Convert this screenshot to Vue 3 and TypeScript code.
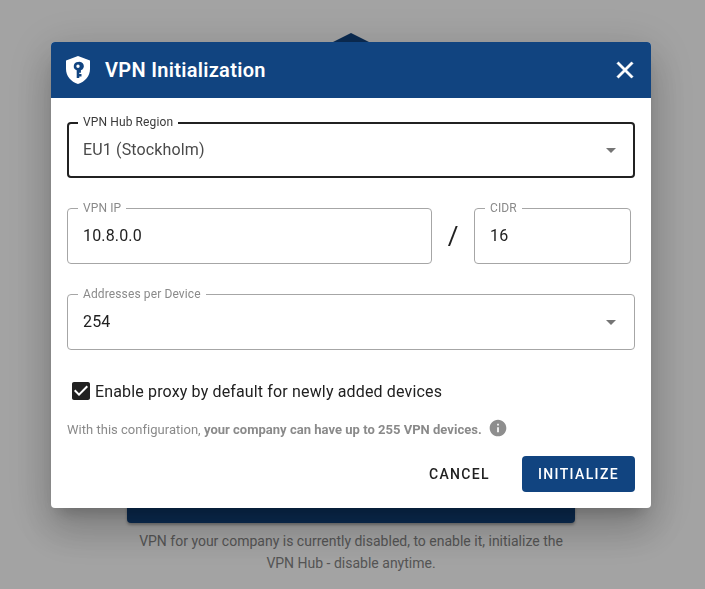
<script setup lang="ts">
import { ref } from 'vue'

const proxy = ref(true)
const closePath = 'M19 6.41 17.59 5 12 10.59 6.41 5 5 6.41 10.59 12 5 17.59 6.41 19 12 13.41 17.59 19 19 17.59 13.41 12z'
</script>

<template>
  <div class="page">
    <svg class="hero" width="448" height="450" viewBox="0 0 448 450">
      <polygon points="224,0 304,40 304,200 144,200 144,40" fill="#114480" />
    </svg>
    <div class="start-btn" />
    <p class="page-text">
      VPN for your company is currently disabled, to enable it, initialize the<br />
      VPN Hub - disable anytime.
    </p>
  </div>

  <div class="backdrop">
    <div class="dialog">
      <header class="dialog-head">
        <svg class="shield" width="24" height="28" viewBox="0 0 24 28">
          <path
            fill="#fff"
            fill-rule="evenodd"
            d="M12 0 24 4.600V13c0 7-4.800 12.600-12 15C4.800 25.600 0 20 0 13V4.600ZM12 6a4.200 4.200 0 0 0-1.300 8.200V22h2.600v-1.600h2.200v-2.300h-2.200v-1.300h1.600v-2.500A4.200 4.200 0 0 0 12 6Zm0 2.500a1.700 1.700 0 1 1 0 3.400 1.700 1.700 0 0 1 0-3.400Z"
          />
        </svg>
        <h2 class="dialog-title">VPN Initialization</h2>
        <svg class="close" width="28" height="28" viewBox="0 0 24 24"><path fill="#fff" stroke="#fff" stroke-width="0.4" :d="closePath" /></svg>
      </header>

      <div class="dialog-body">
        <div class="field focused">
          <span class="field-label">VPN Hub Region</span>
          <span class="field-value muted">EU1 (Stockholm)</span>
          <svg class="arrow" width="24" height="24" viewBox="0 0 24 24"><path d="M7 10l5 5 5-5z" /></svg>
        </div>

        <div class="ip-row">
          <div class="field ip">
            <span class="field-label">VPN IP</span>
            <span class="field-value">10.8.0.0</span>
          </div>
          <span class="slash">/</span>
          <div class="field cidr">
            <span class="field-label">CIDR</span>
            <span class="field-value">16</span>
          </div>
        </div>

        <div class="field">
          <span class="field-label">Addresses per Device</span>
          <span class="field-value">254</span>
          <svg class="arrow" width="24" height="24" viewBox="0 0 24 24"><path d="M7 10l5 5 5-5z" /></svg>
        </div>

        <label class="check-row">
          <svg v-if="proxy" width="24" height="24" viewBox="0 0 24 24">
            <path
              fill="#212121"
              d="M19 3H5c-1.110 0-2 .9-2 2v14c0 1.100.89 2 2 2h14c1.110 0 2-.9 2-2V5c0-1.100-.89-2-2-2zm-9 14l-5-5 1.410-1.410L10 14.170l7.590-7.590L19 8l-9 9z"
            />
          </svg>
          <span>Enable proxy by default for newly added devices</span>
        </label>

        <div class="summary">
          <span>With this configuration, <b>your company can have up to 255 VPN devices.</b></span>
          <svg width="20" height="20" viewBox="0 0 24 24">
            <path
              fill="#8e8e8e"
              d="M12 2C6.480 2 2 6.480 2 12s4.480 10 10 10 10-4.480 10-10S17.520 2 12 2zm1 15h-2v-6h2v6zm0-8h-2V7h2v2z"
            />
          </svg>
        </div>

        <div class="actions">
          <button class="btn btn-text">CANCEL</button>
          <button class="btn btn-primary">INITIALIZE</button>
        </div>
      </div>
    </div>
  </div>
</template>

<style>
html,
body {
  margin: 0;
  height: 100%;
  overflow: hidden;
  background: #fff;
}
</style>

<style scoped>
.page {
  width: 702px;
  height: 589px;
  box-sizing: border-box;
  padding-top: 33px;
  display: flex;
  flex-direction: column;
  align-items: center;
  font-family: Roboto, sans-serif;
}
.hero {
  display: block;
  margin-bottom: -1px;
}
.start-btn {
  width: 448px;
  height: 41px;
  background: #114480;
  border-radius: 0 0 4px 4px;
  box-shadow: 0 2px 3px rgba(0, 0, 0, 0.3);
}
.page-text {
  margin: 7px 0 0;
  font-size: 14px;
  line-height: 22px;
  text-align: center;
  color: #858585;
}
.backdrop {
  position: fixed;
  inset: 0;
  background: rgba(0, 0, 0, 0.36);
  font-family: Roboto, sans-serif;
}
.dialog {
  position: relative;
  width: 600px;
  height: 466px;
  margin: 42px 0 0 51px;
  background: #fff;
  border-radius: 4px;
  box-shadow:
    0 11px 15px -7px rgba(0, 0, 0, 0.2),
    0 24px 38px 3px rgba(0, 0, 0, 0.14),
    0 9px 46px 8px rgba(0, 0, 0, 0.12);
}
.dialog-head {
  height: 56px;
  box-sizing: border-box;
  padding: 0 4px 0 15px;
  display: flex;
  align-items: center;
  background: #114480;
  border-radius: 4px 4px 0 0;
  color: #fff;
}
.shield {
  flex: none;
}
.dialog-title {
  flex: 1;
  margin: 0 0 0 15px;
  font-size: 20px;
  font-weight: 600;
  letter-spacing: 0.3px;
}
.close {
  margin-right: 8px;
}
.dialog-body {
  padding: 24px 16px 16px;
}
.field {
  position: relative;
  height: 56px;
  box-sizing: border-box;
  display: flex;
  align-items: center;
  padding: 0 15px 2px;
  border: 1px solid #a6a6a6;
  border-radius: 4px;
}
.field.focused {
  padding: 0 14px 2px;
  border: 2px solid #212121;
}
.field-label {
  position: absolute;
  top: -7px;
  left: 10px;
  padding: 0 5px;
  background: #fff;
  font-size: 12px;
  line-height: 12px;
  letter-spacing: 0.12px;
  color: #8a8a8a;
}
.focused .field-label {
  top: -8px;
  left: 9px;
  color: #3a3a3a;
}
.field-value {
  font-size: 16px;
  letter-spacing: 0.15px;
  color: #212121;
}
.field-value.muted {
  color: #4a4a4a;
}
.arrow {
  position: absolute;
  top: 15px;
  right: 11px;
  fill: #757575;
}
.focused .arrow {
  top: 14px;
  right: 10px;
}
.ip-row {
  display: flex;
  align-items: center;
  margin: 30px 0;
}
.ip {
  width: 365px;
}
.slash {
  width: 42px;
  text-align: center;
  font-size: 26px;
  color: #212121;
}
.cidr {
  width: 157px;
}
.check-row {
  display: flex;
  align-items: center;
  gap: 2px;
  margin: 29px 0 0 2px;
  font-size: 16px;
  letter-spacing: 0.15px;
  color: #212121;
}
.summary {
  display: flex;
  align-items: center;
  gap: 6px;
  margin-top: 15px;
  font-size: 13px;
  letter-spacing: 0.02px;
  color: #8a8a8a;
}
.summary span {
  position: relative;
  top: 1px;
}
.actions {
  display: flex;
  justify-content: flex-end;
  align-items: center;
  gap: 15px;
  margin-top: 18px;
}
.btn {
  height: 36px;
  padding: 0 17px;
  border: 0;
  border-radius: 4px;
  font-family: Roboto, sans-serif;
  font-size: 14px;
  font-weight: 500;
  letter-spacing: 1.35px;
  background: none;
}
.btn-text {
  color: #212121;
}
.btn-primary {
  width: 113px;
  padding: 0;
  color: #fff;
  background: #114480;
}
</style>
